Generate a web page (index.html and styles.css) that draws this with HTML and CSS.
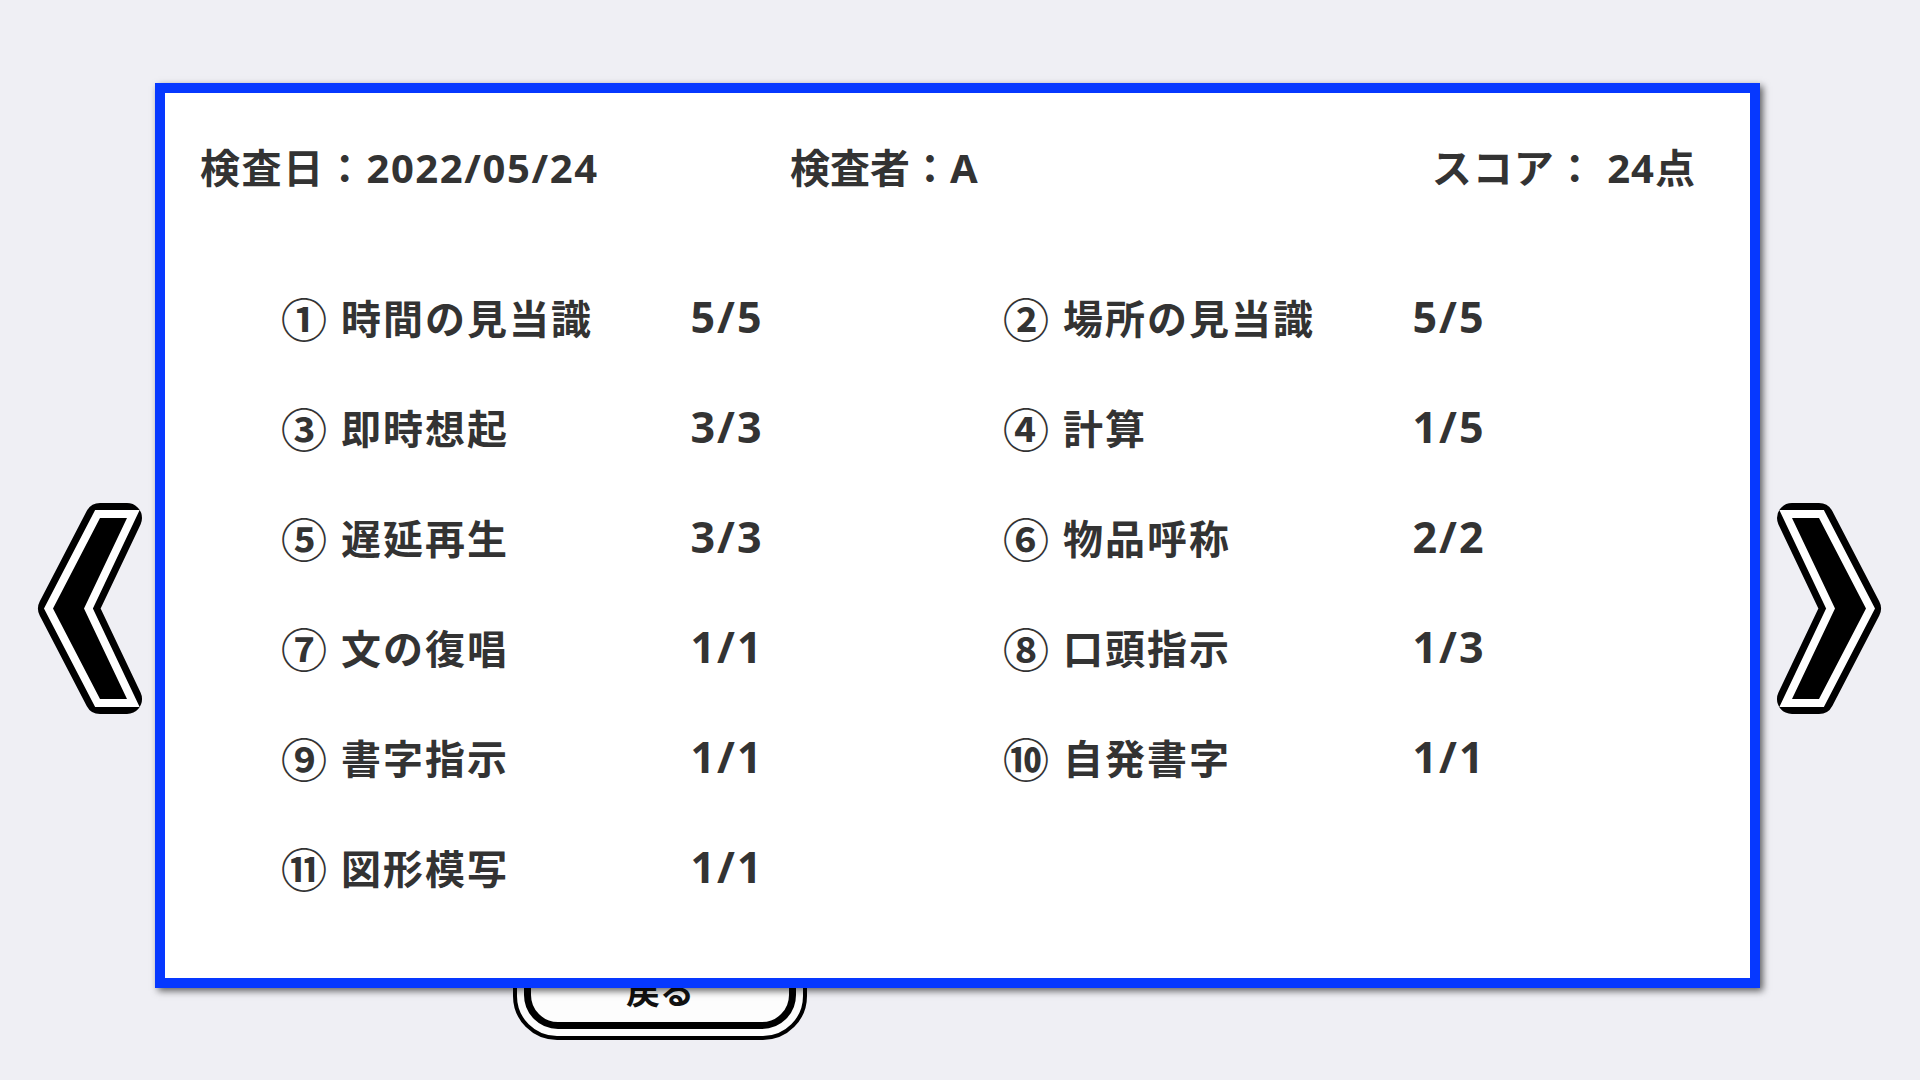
FILE: index.html
```html
<!DOCTYPE html>
<html lang="ja">
<head>
<meta charset="utf-8">
<title>検査結果</title>
<link rel="stylesheet" href="styles.css">
</head>
<body>
<div class="stage">
  <div class="row">
    <button class="nav nav-prev" aria-label="前へ">
      <svg viewBox="0 0 104 209" width="104" height="209">
        <polygon points="61,14 88,14 45,104.5 88,195 61,195 14,104.5" fill="#000" stroke="#000" stroke-width="30" stroke-linejoin="round"/>
        <polygon points="61,14 88,14 45,104.5 88,195 61,195 14,104.5" fill="#fff" stroke="#fff" stroke-width="16" stroke-linejoin="miter"/>
        <polygon points="61,14 88,14 45,104.5 88,195 61,195 14,104.5" fill="#000"/>
      </svg>
    </button>
    <section class="card">
      <header class="header">
        <div class="h-date">検査日：2022/05/24</div>
        <div class="h-examiner">検査者：A</div>
        <div class="h-score">スコア： 24点</div>
      </header>
      <div class="grid">
        <div class="item"><span class="num">①</span><span class="label">時間の見当識</span><span class="value">5/5</span></div>
        <div class="item"><span class="num">②</span><span class="label">場所の見当識</span><span class="value">5/5</span></div>
        <div class="item"><span class="num">③</span><span class="label">即時想起</span><span class="value">3/3</span></div>
        <div class="item"><span class="num">④</span><span class="label">計算</span><span class="value">1/5</span></div>
        <div class="item"><span class="num">⑤</span><span class="label">遅延再生</span><span class="value">3/3</span></div>
        <div class="item"><span class="num">⑥</span><span class="label">物品呼称</span><span class="value">2/2</span></div>
        <div class="item"><span class="num">⑦</span><span class="label">文の復唱</span><span class="value">1/1</span></div>
        <div class="item"><span class="num">⑧</span><span class="label">口頭指示</span><span class="value">1/3</span></div>
        <div class="item"><span class="num">⑨</span><span class="label">書字指示</span><span class="value">1/1</span></div>
        <div class="item"><span class="num">⑩</span><span class="label">自発書字</span><span class="value">1/1</span></div>
        <div class="item"><span class="num">⑪</span><span class="label">図形模写</span><span class="value">1/1</span></div>
      </div>
    </section>
    <button class="nav nav-next" aria-label="次へ">
      <svg viewBox="0 0 104 209" width="104" height="209">
        <polygon points="43,14 16,14 59,104.5 16,195 43,195 90,104.5" fill="#000" stroke="#000" stroke-width="30" stroke-linejoin="round"/>
        <polygon points="43,14 16,14 59,104.5 16,195 43,195 90,104.5" fill="#fff" stroke="#fff" stroke-width="16" stroke-linejoin="miter"/>
        <polygon points="43,14 16,14 59,104.5 16,195 43,195 90,104.5" fill="#000"/>
      </svg>
    </button>
  </div>
  <div class="footer">
    <button class="back"><span class="back-inner">戻る</span></button>
  </div>
</div>
</body>
</html>
```
FILE: styles.css
```css
html, body {
  margin: 0;
  padding: 0;
}
body {
  width: 1920px;
  height: 1080px;
  overflow: hidden;
  background: #efeff4;
  font-family: "Noto Sans", "Noto Sans CJK JP", sans-serif;
  color: #333333;
}
.stage {
  padding-top: 83px;
  padding-left: 39px;
}
.row {
  display: flex;
  align-items: flex-start;
}
.nav {
  width: 104px;
  height: 209px;
  margin-top: 421px;
  padding: 0;
  border: 0;
  background: transparent;
  display: block;
}
.nav svg {
  display: block;
  overflow: visible;
}
.nav-prev {
  margin-right: 12px;
}
.nav-next {
  margin-left: 16px;
}
.card {
  position: relative;
  z-index: 1;
  box-sizing: border-box;
  width: 1605px;
  height: 905px;
  border: 10px solid #0638ff;
  background: #ffffff;
  box-shadow: 3px 3px 7px rgba(0, 0, 0, 0.6);
  padding-top: 55px;
  font-weight: 700;
}
.header {
  display: flex;
  padding-left: 35px;
  padding-right: 54px;
  font-size: 40px;
  line-height: 40px;
  height: 40px;
}
.h-date {
  width: 590px;
  letter-spacing: 1.6px;
}
.h-score {
  margin-left: auto;
  letter-spacing: 1px;
}
.grid {
  margin-top: 74px;
  padding-left: 118px;
  display: grid;
  grid-template-columns: 722px 722px;
  grid-auto-rows: 110px;
  align-items: center;
  font-size: 40px;
  line-height: 40px;
}
.item {
  display: flex;
  align-items: center;
  white-space: nowrap;
}
.num {
  width: 58px;
  font-family: "Noto Sans CJK JP", sans-serif;
  font-size: 46px;
  line-height: 40px;
  font-weight: 700;
  margin-left: -2px;
  margin-right: 2px;
}
.label {
  width: 346px;
  font-family: "Noto Sans CJK JP", sans-serif;
  letter-spacing: 2px;
}
.value {
  width: 78px;
  padding-left: 2px;
  box-sizing: border-box;
  text-align: center;
  font-size: 43px;
  letter-spacing: 2px;
  font-variant-numeric: tabular-nums;
}
.footer {
  margin-top: -48px;
  padding-left: 474px;
}
.back {
  box-sizing: border-box;
  width: 294px;
  height: 100px;
  padding: 7px;
  border: 4px solid #000;
  border-radius: 44px;
  background: #fdfdfd;
  display: block;
}
.back-inner {
  box-sizing: border-box;
  display: flex;
  align-items: center;
  justify-content: center;
  width: 100%;
  height: 100%;
  border: 7px solid #000;
  border-radius: 34px;
  background: #fdfdfd;
  font-family: "Noto Sans CJK JP", sans-serif;
  font-weight: 700;
  font-size: 34px;
  line-height: 34px;
  color: #111;
}
```
